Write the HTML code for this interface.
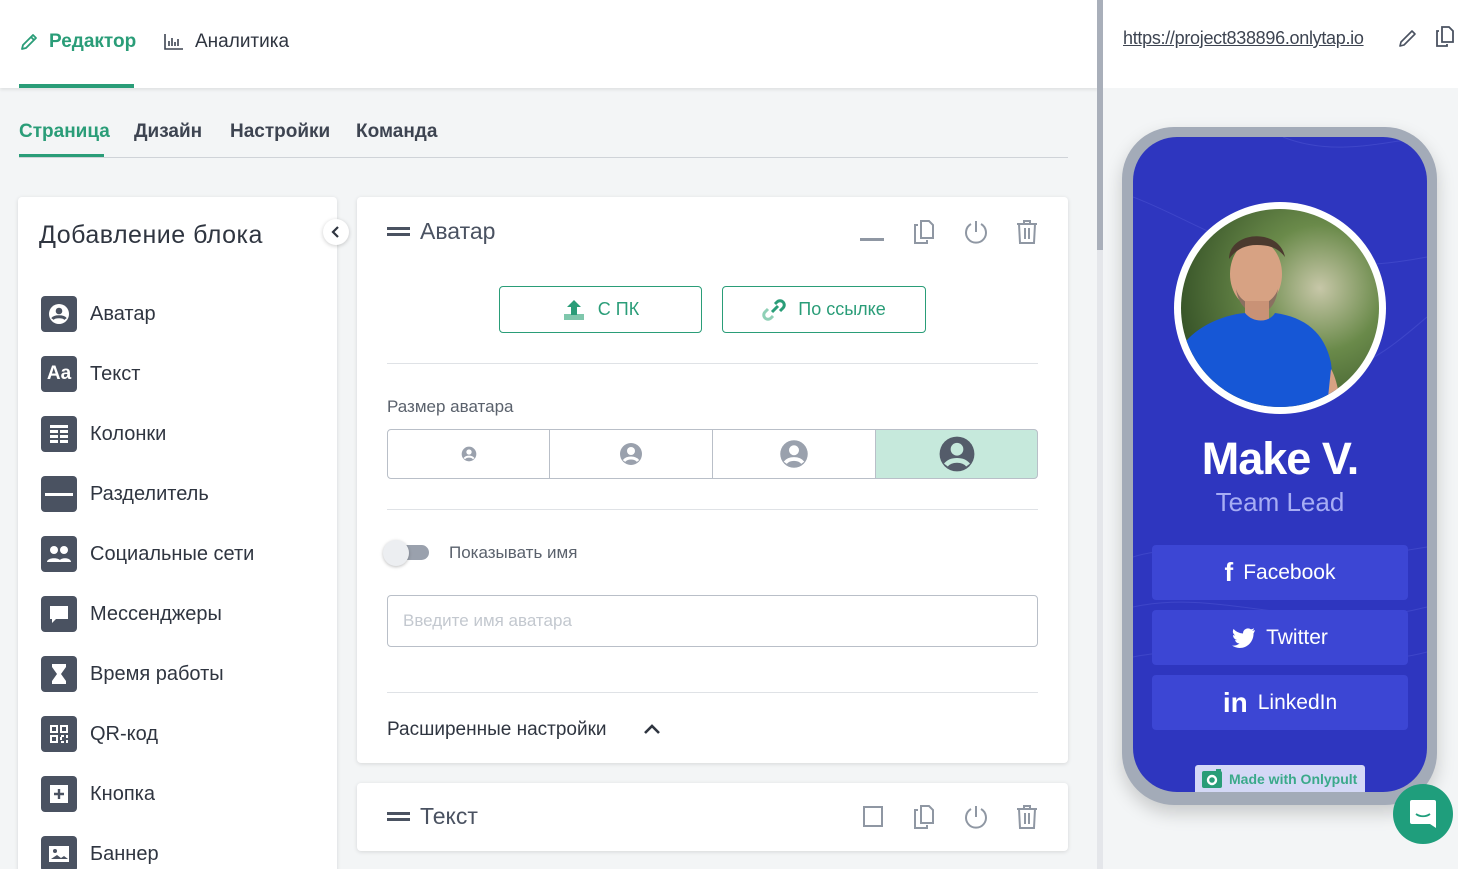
<!DOCTYPE html>
<html><head><meta charset="utf-8"><style>
*{box-sizing:border-box;margin:0;padding:0}
html{width:1458px;height:869px;overflow:hidden}
body{width:1458px;height:869px;overflow:hidden;background:#f3f5f6;font-family:"Liberation Sans",sans-serif;position:relative;color:#3d4451}
.abs{position:absolute}
.top{left:0;top:0;width:1098px;height:88px;background:#fff;box-shadow:0 2px 3px rgba(0,0,0,.08)}
.rtop{left:1103px;top:0;width:355px;height:88px;background:#fff}
.card{background:#fff;border-radius:4px;box-shadow:0 1px 4px rgba(0,0,0,.12)}
.li{position:absolute;left:41px;height:36px;display:flex;align-items:center;font-size:20px;color:#2f3540}
.li .ic{width:36px;height:36px;background:#4a5261;border-radius:4px;margin-right:13px;display:flex;align-items:center;justify-content:center}
.btn{position:absolute;border:1.5px solid #2a9d78;border-radius:4px;color:#2a9d78;font-size:18px;display:flex;align-items:center;justify-content:center;gap:12px}
.seg{position:absolute;top:429px;height:50px;border:1px solid #b9bfc8;display:flex;align-items:center;justify-content:center}
.hr{position:absolute;height:1px;background:#dfe2e6}
.sb{position:absolute;left:1152px;width:256px;height:55px;background:#3c46d4;border-radius:4px;color:#fff;font-size:21px;display:flex;align-items:center;justify-content:center;gap:10px}
</style></head><body>
<div class="abs top"></div>
<div class="abs rtop"></div>
<div class="abs" style="left:1097px;top:0;width:6px;height:869px;background:#e4e6ea"></div>
<div class="abs" style="left:1097px;top:0;width:6px;height:250px;background:#a9afba"></div>

<svg class="abs" style="left:19px;top:32px" width="20" height="20" viewBox="0 0 20 20"><path d="M3 17l1-4L14 3l3 3L7 16z M12 5l3 3" fill="none" stroke="#2a9d78" stroke-width="1.8" stroke-linejoin="round"/></svg>
<div class="abs" style="left:49px;top:31px;font-size:19px;color:#2a9d78;font-weight:bold">Редактор</div>
<div class="abs" style="left:19px;top:84px;width:115px;height:4px;background:#2a9d78"></div>
<svg class="abs" style="left:164px;top:33px" width="20" height="18" viewBox="0 0 20 18"><path d="M1 1v15h18M5 13V8M8 13V5M11 13V9M14 13V6" fill="none" stroke="#3d4451" stroke-width="1.6"/></svg>
<div class="abs" style="left:195px;top:31px;font-size:19px;color:#2f3540">Аналитика</div>

<div class="abs" style="left:19px;top:121px;font-size:19px;font-weight:bold;color:#2a9d78">Страница</div>
<div class="abs" style="left:134px;top:121px;font-size:19px;font-weight:bold;color:#3d4451">Дизайн</div>
<div class="abs" style="left:230px;top:121px;font-size:19px;font-weight:bold;color:#3d4451">Настройки</div>
<div class="abs" style="left:356px;top:121px;font-size:19px;font-weight:bold;color:#3d4451">Команда</div>
<div class="hr" style="left:19px;top:157px;width:1049px;background:#cfd3d8"></div>
<div class="abs" style="left:19px;top:154px;width:85px;height:3px;background:#2a9d78"></div>

<div class="abs card" style="left:18px;top:197px;width:319px;height:700px"></div>
<div class="abs" style="left:39px;top:221px;font-size:25px;color:#2f3540;letter-spacing:.5px">Добавление блока</div>
<div class="abs" style="left:323px;top:219px;width:26px;height:26px;border-radius:50%;background:#fff;box-shadow:0 1px 4px rgba(0,0,0,.2)"></div>
<svg class="abs" style="left:331px;top:226px" width="10" height="12"><path d="M7 1L2 6l5 5" fill="none" stroke="#2f3540" stroke-width="2.2"/></svg>

<div class="li" style="top:296px"><div class="ic"><svg width="24" height="24" viewBox="0 0 24 24"><circle cx="12" cy="12" r="10" fill="#fff"/><circle cx="12" cy="9" r="3.3" fill="#4a5261"/><path d="M5.5 17c2-3 11-3 13 0" stroke="#4a5261" stroke-width="3" fill="none"/></svg></div>Аватар</div>
<div class="li" style="top:356px"><div class="ic" style="color:#fff;font-weight:bold;font-size:19px">Aa</div>Текст</div>
<div class="li" style="top:416px"><div class="ic"><svg width="22" height="22" viewBox="0 0 22 22" fill="#fff"><rect x="2" y="2" width="18" height="3"/><rect x="2" y="7" width="8" height="3"/><rect x="12" y="7" width="8" height="3"/><rect x="2" y="12" width="8" height="3"/><rect x="12" y="12" width="8" height="3"/><rect x="2" y="17" width="8" height="3"/><rect x="12" y="17" width="8" height="3"/></svg></div>Колонки</div>
<div class="li" style="top:476px"><div class="ic"><div style="width:28px;height:3px;background:#fff"></div></div>Разделитель</div>
<div class="li" style="top:536px"><div class="ic"><svg width="26" height="20" viewBox="0 0 26 20" fill="#fff"><circle cx="8" cy="6" r="4"/><circle cx="18" cy="6" r="4"/><path d="M1 18c0-5 14-5 14 0zM13 18c0-5 12-5 12 0z"/></svg></div>Социальные сети</div>
<div class="li" style="top:596px"><div class="ic"><svg width="24" height="24" viewBox="0 0 24 24" fill="#fff"><path d="M3 4h18v13H9l-4 4v-4H3z"/></svg></div>Мессенджеры</div>
<div class="li" style="top:656px"><div class="ic"><svg width="20" height="24" viewBox="0 0 20 24" fill="#fff"><path d="M3 2h14v3l-5 7 5 7v3H3v-3l5-7-5-7z"/></svg></div>Время работы</div>
<div class="li" style="top:716px"><div class="ic"><svg width="20" height="20" viewBox="0 0 20 20" fill="none" stroke="#fff" stroke-width="2"><rect x="2" y="2" width="6" height="6"/><rect x="12" y="2" width="6" height="6"/><rect x="2" y="12" width="6" height="6"/><path d="M12 12h6v6h-6z" stroke-dasharray="3 2"/></svg></div>QR-код</div>
<div class="li" style="top:776px"><div class="ic"><svg width="22" height="22" viewBox="0 0 22 22"><rect x="2" y="2" width="18" height="18" fill="#fff"/><path d="M11 6v10M6 11h10" stroke="#4a5261" stroke-width="2.4"/></svg></div>Кнопка</div>
<div class="li" style="top:836px"><div class="ic"><svg width="22" height="20" viewBox="0 0 22 20"><rect x="1" y="2" width="20" height="16" fill="#fff"/><circle cx="7" cy="7" r="2" fill="#4a5261"/><path d="M3 15l6-4 4 3 3-2 4 3z" fill="#4a5261"/></svg></div>Баннер</div>

<div class="abs card" style="left:357px;top:197px;width:711px;height:566px"></div>
<div class="abs" style="left:387px;top:227px;width:23px;height:3px;background:#4a5261;box-shadow:0 6px 0 #4a5261"></div>
<div class="abs" style="left:420px;top:218px;font-size:23px;color:#4a5261">Аватар</div>
<div class="abs" style="left:860px;top:238px;width:24px;height:3px;background:#8f97a3"></div>
<svg class="abs" style="left:912px;top:219px" width="24" height="26" viewBox="0 0 24 26" fill="none" stroke="#8f97a3" stroke-width="2"><path d="M9 2h8l4 4v13H9z"/><path d="M6 6H3v18h12v-3"/></svg>
<svg class="abs" style="left:963px;top:219px" width="26" height="26" viewBox="0 0 26 26" fill="none" stroke="#8f97a3" stroke-width="2"><path d="M8 5a10 10 0 1 0 10 0"/><path d="M13 2v11"/></svg>
<svg class="abs" style="left:1016px;top:219px" width="22" height="26" viewBox="0 0 22 26" fill="none" stroke="#8f97a3" stroke-width="2"><path d="M1 5h20M8 5V2h6v3M3 5l1 19h14l1-19M9 9v11M13 9v11"/></svg>

<div class="btn" style="left:499px;top:286px;width:203px;height:47px"><svg width="24" height="24" viewBox="0 0 24 24"><rect x="2" y="16" width="20" height="6" fill="#7fc7ac"/><path d="M12 2l-7 7h4v8h6V9h4z" fill="#2a9d78"/></svg>С ПК</div>
<div class="btn" style="left:722px;top:286px;width:204px;height:47px"><svg width="24" height="24" viewBox="0 0 24 24" fill="none" stroke-width="3"><path d="M10 14l6-6" stroke="#2a9d78"/><path d="M13 6l2-2a4 4 0 0 1 6 6l-3 3" stroke="#2a9d78"/><path d="M11 18l-2 2a4 4 0 0 1-6-6l3-3" stroke="#8fd0b6"/></svg>По ссылке</div>

<div class="hr" style="left:387px;top:363px;width:651px"></div>
<div class="abs" style="left:387px;top:397px;font-size:17px;color:#5a616c">Размер аватара</div>
<div class="seg" style="left:387px;width:163px;border-radius:4px 0 0 4px"><svg width="16" height="16" viewBox="0 0 24 24"><circle cx="12" cy="12" r="11" fill="#9aa1ad"/><circle cx="12" cy="9" r="4" fill="#fff"/><path d="M5 19c3-4 11-4 14 0" stroke="#fff" stroke-width="3" fill="none"/></svg></div>
<div class="seg" style="left:549px;width:164px"><svg width="24" height="24" viewBox="0 0 24 24"><circle cx="12" cy="12" r="11" fill="#9aa1ad"/><circle cx="12" cy="9" r="4" fill="#fff"/><path d="M5 19c3-4 11-4 14 0" stroke="#fff" stroke-width="3" fill="none"/></svg></div>
<div class="seg" style="left:712px;width:164px"><svg width="30" height="30" viewBox="0 0 24 24"><circle cx="12" cy="12" r="11" fill="#9aa1ad"/><circle cx="12" cy="9" r="4" fill="#fff"/><path d="M5 19c3-4 11-4 14 0" stroke="#fff" stroke-width="3" fill="none"/></svg></div>
<div class="seg" style="left:875px;width:163px;background:#c6e9dc;border-radius:0 4px 4px 0"><svg width="38" height="38" viewBox="0 0 24 24"><circle cx="12" cy="12" r="11" fill="#545c6a"/><circle cx="12" cy="9" r="4" fill="#c6e9dc"/><path d="M5 19c3-4 11-4 14 0" stroke="#c6e9dc" stroke-width="3" fill="none"/></svg></div>

<div class="hr" style="left:387px;top:509px;width:651px"></div>
<div class="abs" style="left:387px;top:545px;width:42px;height:15px;border-radius:8px;background:#9aa1ad"></div>
<div class="abs" style="left:383px;top:540px;width:26px;height:26px;border-radius:50%;background:#eceef1;box-shadow:0 1px 3px rgba(0,0,0,.25)"></div>
<div class="abs" style="left:449px;top:543px;font-size:17px;color:#5a616c">Показывать имя</div>
<div class="abs" style="left:387px;top:595px;width:651px;height:52px;border:1px solid #b9bfc8;border-radius:4px"></div>
<div class="abs" style="left:403px;top:611px;font-size:17px;color:#c3c8cf">Введите имя аватара</div>
<div class="hr" style="left:387px;top:692px;width:651px"></div>
<div class="abs" style="left:387px;top:719px;font-size:19px;color:#2f3540">Расширенные настройки</div>
<svg class="abs" style="left:643px;top:722px" width="18" height="14"><path d="M2 11l7-7 7 7" fill="none" stroke="#2f3540" stroke-width="2.6"/></svg>

<div class="abs card" style="left:357px;top:783px;width:711px;height:68px"></div>
<div class="abs" style="left:387px;top:812px;width:23px;height:3px;background:#4a5261;box-shadow:0 6px 0 #4a5261"></div>
<div class="abs" style="left:420px;top:803px;font-size:23px;color:#4a5261">Текст</div>
<div class="abs" style="left:863px;top:806px;width:20px;height:21px;border:2px solid #8f97a3"></div>
<svg class="abs" style="left:912px;top:804px" width="24" height="26" viewBox="0 0 24 26" fill="none" stroke="#8f97a3" stroke-width="2"><path d="M9 2h8l4 4v13H9z"/><path d="M6 6H3v18h12v-3"/></svg>
<svg class="abs" style="left:963px;top:804px" width="26" height="26" viewBox="0 0 26 26" fill="none" stroke="#8f97a3" stroke-width="2"><path d="M8 5a10 10 0 1 0 10 0"/><path d="M13 2v11"/></svg>
<svg class="abs" style="left:1016px;top:804px" width="22" height="26" viewBox="0 0 22 26" fill="none" stroke="#8f97a3" stroke-width="2"><path d="M1 5h20M8 5V2h6v3M3 5l1 19h14l1-19M9 9v11M13 9v11"/></svg>

<div class="abs" style="left:1123px;top:28px;font-size:18px;color:#3d4451;text-decoration:underline;letter-spacing:-.3px">https://project838896.onlytap.io</div>
<svg class="abs" style="left:1397px;top:27px" width="22" height="22" viewBox="0 0 22 22"><path d="M3 19l1-4L15 4l3 3L7 18z" fill="none" stroke="#4a5261" stroke-width="1.6" stroke-linejoin="round"/></svg>
<svg class="abs" style="left:1435px;top:26px" width="20" height="22" viewBox="0 0 20 22" fill="none" stroke="#4a5261" stroke-width="1.8"><path d="M7 1h7l4 4v11H7z"/><path d="M4 5H2v15h10v-2"/></svg>

<div class="abs" style="left:1122px;top:127px;width:315px;height:678px;border-radius:52px;background:#a3abb8;box-shadow:0 8px 18px rgba(0,0,0,.18)"></div>
<div class="abs" style="left:1133px;top:137px;width:294px;height:655px;border-radius:44px;background:#2e36bf;overflow:hidden">
<svg width="294" height="655" style="position:absolute;left:0;top:0" fill="none" stroke="#4a52d0" stroke-width="1" opacity=".6"><path d="M0 60C80 90 140 150 294 120"/><path d="M0 420C60 400 120 440 294 410"/><path d="M0 470C90 450 180 500 294 470"/><path d="M0 520C100 500 200 540 294 515"/><path d="M200 240C250 220 270 200 294 180"/><path d="M150 0C200 20 250 5 294 0"/></svg>
</div>
<div class="abs" style="left:1174px;top:202px;width:212px;height:212px;border-radius:50%;background:#fff"></div>
<svg class="abs" style="left:1181px;top:209px" width="198" height="198" viewBox="0 0 198 198">
<defs><clipPath id="c"><circle cx="99" cy="99" r="99"/></clipPath>
<radialGradient id="bg" cx=".7" cy=".4" r=".8"><stop offset="0" stop-color="#c7c7a8"/><stop offset=".4" stop-color="#6a8a4a"/><stop offset="1" stop-color="#2e4a22"/></radialGradient></defs>
<g clip-path="url(#c)">
<rect width="198" height="198" fill="url(#bg)"/>
<ellipse cx="75" cy="65" rx="26" ry="34" fill="#d7a283"/>
<path d="M48 50c0-28 50-32 56-2c-6-8-14-12-28-12c-14 0-22 6-28 14z" fill="#4b3a2e"/>
<path d="M55 80c6 20 34 22 42 0c-2 14-8 24-20 24c-12 0-20-10-22-24z" fill="#8a7060"/>
<rect x="64" y="92" width="24" height="22" fill="#c99276"/>
<path d="M0 198V140c10-20 40-34 64-36c8 10 24 10 30 0c30 4 50 20 56 50l6 50z" fill="#1657d6"/>
<path d="M150 160c6 10 8 26 10 38h-14z" fill="#d7a283"/>
</g></svg>
<div class="abs" style="left:1133px;top:433px;width:294px;text-align:center;font-size:45px;font-weight:bold;color:#fff;letter-spacing:-1px">Make V.</div>
<div class="abs" style="left:1133px;top:487px;width:294px;text-align:center;font-size:26px;color:#a7adf4">Team Lead</div>
<div class="sb" style="top:545px"><span style="font-weight:bold;font-size:26px">f</span>Facebook</div>
<div class="sb" style="top:610px"><svg width="24" height="20" viewBox="0 0 24 20"><path d="M23 2c-1 .5-2 .7-3 .8 1-.6 2-1.6 2-2.6-1 .6-2 1-3 1.2A5 5 0 0 0 11 5.5 14 14 0 0 1 1.5 1 5 5 0 0 0 3 7.5 5 5 0 0 1 1 7a5 5 0 0 0 4 5 5 5 0 0 1-2 .1 5 5 0 0 0 4.5 3.4A10 10 0 0 1 0 17.5 14 14 0 0 0 7.5 20C16.5 20 21.5 12.5 21.5 6v-.6C22 4.6 22.7 3.4 23 2z" fill="#fff"/></svg>Twitter</div>
<div class="sb" style="top:675px"><span style="font-weight:bold;font-size:28px">in</span>LinkedIn</div>
<div class="abs" style="left:1195px;top:765px;width:170px;height:27px;background:#d4d8f6;border-radius:3px 3px 0 0;display:flex;align-items:center;gap:6px;padding-left:6px;font-size:14px;color:#3aa98a;font-weight:bold;white-space:nowrap;overflow:hidden"><svg width="22" height="22" viewBox="0 0 22 22" style="flex:none"><rect x="1" y="3" width="20" height="17" rx="2" fill="#2a9d78"/><circle cx="11" cy="12" r="4" fill="none" stroke="#fff" stroke-width="2.4"/><rect x="15" y="1" width="5" height="4" fill="#2a9d78"/></svg>Made with Onlypult</div>
<div class="abs" style="left:1393px;top:784px;width:60px;height:60px;border-radius:50%;background:#1f9e7c"></div>
<svg class="abs" style="left:1409px;top:799px" width="28" height="30" viewBox="0 0 28 30"><path d="M3 1h22a2 2 0 0 1 2 2v26l-6-4H3a2 2 0 0 1-2-2V3a2 2 0 0 1 2-2z" fill="#fff"/><path d="M7 15c4 3 10 3 14 0" stroke="#1f9e7c" stroke-width="1.8" fill="none"/></svg>
</body></html>
